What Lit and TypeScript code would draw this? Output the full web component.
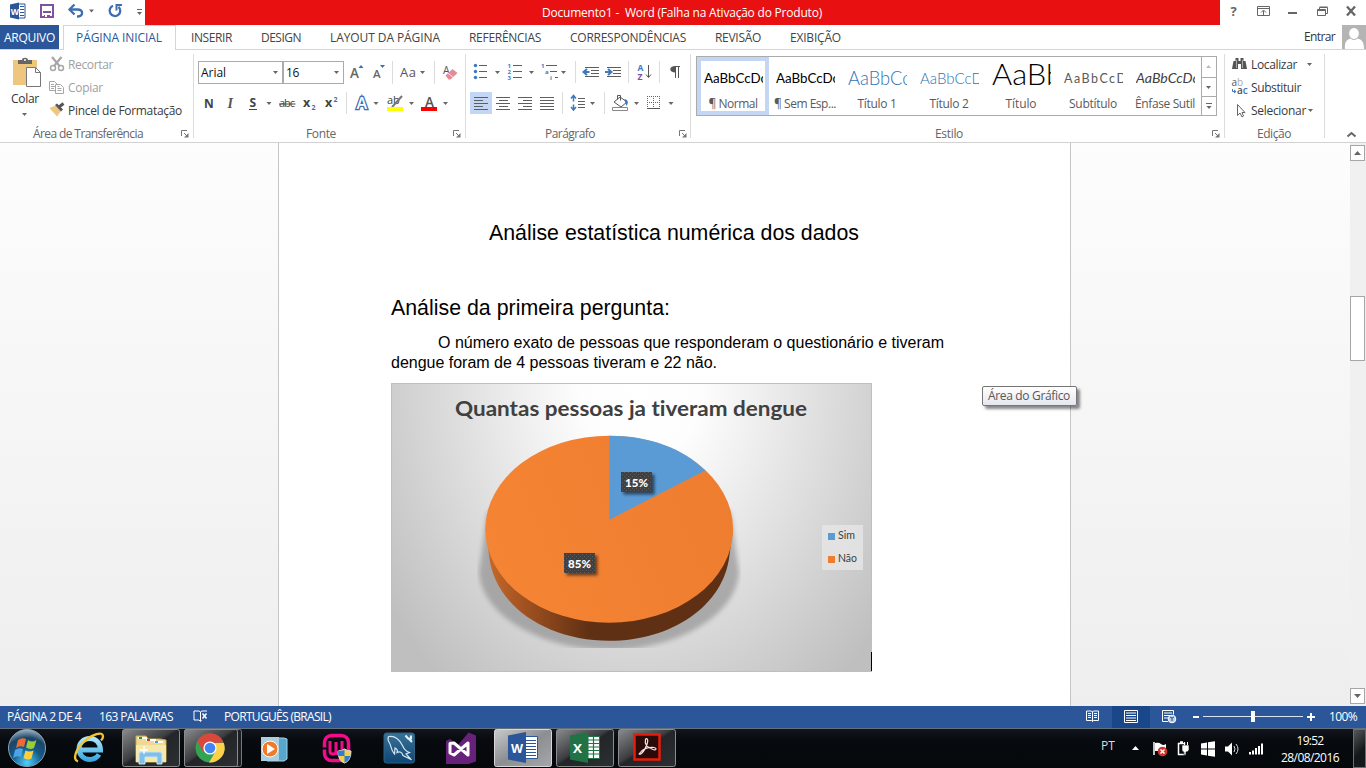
import { LitElement, html, svg, css } from "lit";
import { customElement } from "lit/decorators.js";

// Icon cell: the viewBox is given in window coordinates, so glyph parts share one grid.
const cell = (x: number, y: number, w: number, h: number, body: unknown) =>
  html`<svg class="cell" width=${w} height=${h} viewBox="${x} ${y} ${w} ${h}">${body}</svg>`;

// Text run set to a given advance width.
const t = (text: string, w: number, cls = "") =>
  html`<span class="t ${cls}" data-w=${w}>${text}</span>`;

const arrow = (x: number, y: number, c = "#666") => svg`<path d="M${x} ${y}h5l-2.5 3z" fill=${c} />`;
const vline = (x: number, y: number, h: number) => svg`<path d="M${x + 0.5} ${y}v${h}" stroke="#dcdcdc" />`;
const lines = (x: number, y: number, ws: number[][], step = 3) =>
  ws.map(([dx, w], i) => svg`<rect x=${x + dx} y=${y + i * step} width=${w} height="1" fill="#5e5e5e" />`);

const launcher = html`<svg class="launch" width="8" height="8" viewBox="0 0 8 8">
  <path d="M.5 6V.5H6M3 3l3 3" stroke="#777" fill="none" /><path d="M7.500 3v4.500H3z" fill="#777" /></svg>`;

const TABS: [string, number][] = [
  ["INSERIR", 41], ["DESIGN", 40], ["LAYOUT DA PÁGINA", 110], ["REFERÊNCIAS", 72],
  ["CORRESPONDÊNCIAS", 116], ["REVISÃO", 46], ["EXIBIÇÃO", 51],
];

const STYLES = [
  { s: "AaBbCcDc", n: "¶ Normal", w: 49, size: 13, len: 63, c: "#000", wt: 400, y: 22 },
  { s: "AaBbCcDc", n: "¶ Sem Esp...", w: 62, size: 13, len: 63, c: "#000", wt: 400, y: 22 },
  { s: "AaBbCc", n: "Título 1", w: 39, size: 19, len: 63, c: "#2e74b5", wt: 300, y: 24 },
  { s: "AaBbCcD", n: "Título 2", w: 39, size: 16, len: 63, c: "#2e74b5", wt: 300, y: 22.5 },
  { s: "AaBb", n: "Título", w: 31, size: 29, len: 71, c: "#000", wt: 300, y: 24 },
  { s: "AaBbCcD", n: "Subtítulo", w: 48, size: 12.5, len: 62, c: "#5a5a5a", wt: 400, y: 22, sp: true },
  { s: "AaBbCcDc", n: "Ênfase Sutil", w: 60, size: 13, len: 63, c: "#404040", wt: 400, y: 22, it: true },
];

const quick = cell(0, 0, 145, 25, svg`
  <path d="M18 4h7v14h-7z" fill="#fff" stroke="#2b579a" /><path d="M20 6.500h4M20 9.500h4M20 12.500h4M20 15.500h4" stroke="#2b579a" />
  <path d="M10 4.500l9-2v17l-9-2z" fill="#2b579a" /><text x="10.800" y="14.500" class="gl" font-size="8.500" font-weight="700" fill="#fff" textLength="7.500">W</text>
  <path d="M41 5h12v12h-12z" fill="none" stroke="#80519f" stroke-width="2" /><path d="M43 11h8v2h-8zM44 15h6v3h-6z" fill="#80519f" /><path d="M45 15h2v2h-2z" fill="#fff" />
  <path d="M71 9.500h6.500c6 0 6 7 .5 7h-1" fill="none" stroke="#3e6db5" stroke-width="2.300" /><path d="M74.500 4.500l-5 5 5 5" fill="none" stroke="#3e6db5" stroke-width="2.300" />
  ${arrow(89, 9.5)}
  <path d="M113 5.800a5.300 5.300 0 1 0 5.500 1" fill="none" stroke="#3e6db5" stroke-width="2.300" /><path d="M116.500 10.500V5h5.500" fill="none" stroke="#3e6db5" stroke-width="2" />
  <path d="M137 9.500h5" stroke="#666" />${arrow(137, 12)}`);

const windowKeys = cell(1220, 0, 146, 25, svg`
  <text x="1230.500" y="16" class="gl" font-size="13" font-weight="700" fill="#666">?</text>
  <path d="M1257.500 6.500h12v9h-12zM1257.500 8.500h12" fill="none" stroke="#666" /><path d="M1263.500 15v-4M1261 12.500l2.500-2.500 2.500 2.500" fill="none" stroke="#666" />
  <path d="M1288 13h9" stroke="#666" stroke-width="2" />
  <path d="M1319.500 9V7.500h8v6h-2M1319.500 7h8" fill="none" stroke="#666" /><path d="M1317.500 9.500h8v6h-8zM1317.500 10.500h8" fill="#fff" stroke="#666" />
  <path d="M1347 6.500l8 9M1355 6.500l-8 9" stroke="#666" stroke-width="2.300" />`);

const avatar = cell(1342, 25, 24, 24, svg`<path d="M1342 25h24v24h-24z" fill="#b4b4b4" />
  <path d="M1345 49c-1-8 3-10 6-10.500h6c4 .5 7 2.500 7 10.500z" fill="#fff" /><ellipse cx="1354" cy="33.500" rx="5.300" ry="6" fill="#fff" stroke="#b4b4b4" />`);

const paste = cell(6, 55, 38, 37, svg`
  <path d="M13 61h24v25H13z" fill="#eec67d" /><path d="M18 65v-4h4c0-3 6-3 6 0h4v4z" fill="#666" /><circle cx="25" cy="61" r="1" fill="#fff" />
  <path d="M26.500 68.500h9l5 5v14h-14z" fill="#fff" stroke="#777" /><path d="M35.500 68.500v5h5" fill="none" stroke="#777" />`);
const cut = cell(47, 54, 21, 22, svg`<g fill="none" stroke="#a6a6a6" stroke-width="1.500"><circle cx="53" cy="68" r="2.500" /><circle cx="61" cy="68" r="2.500" /></g>
  <path d="M52 57l7.500 9M61.500 57L54 66" stroke="#a6a6a6" stroke-width="2.200" />`);
const copy = cell(47, 76, 21, 23, svg`<g stroke="#a6a6a6" fill="#fff"><path d="M49.500 81.500h5l3 3v6h-8z" /><path d="M55.500 84.500h5l3 3v6h-8z" /></g>
  <path d="M51 84.500h3M51 86.500h4M51 88.500h3M57.500 88.500h4M57.500 90.500h4M57.500 86.500h2" stroke="#a6a6a6" />`);
const brush = cell(47, 99, 21, 23, svg`<path d="M49.500 108l6-2.500 5.500 5.500-4 5.500z" fill="#eec67d" /><path d="M55 105l2-1.500 6 6-2 2z" fill="#555" /><path d="M59 107l4.500-3.500" stroke="#555" stroke-width="3" />`);

const fontRow1 = cell(344, 61, 121, 24, svg`
  <text x="350" y="78" class="gl" font-size="13.500" font-weight="600" fill="#666">A</text><path d="M358.500 68h5l-2.500-3z" fill="#3e6db5" />
  <text x="373" y="78" class="gl" font-size="11.500" font-weight="600" fill="#666">A</text><path d="M380 65h5l-2.500 3z" fill="#3e6db5" />
  ${vline(392, 61, 23)}<text x="400" y="76.500" class="gl" font-size="13" fill="#555" textLength="16">Aa</text>${arrow(420, 71)}${vline(434, 61, 23)}
  <text x="443" y="74" class="gl" font-size="10.500" fill="#555">A</text><path d="M445.500 75.500l7-6.500 5 4-7 6.500h-2z" fill="#e8899a" /><path d="M448 73.200l5 4" stroke="#fff" stroke-width=".8" />`);
const fontRow2 = cell(198, 92, 267, 24, svg`
  <text x="204" y="107.500" class="gl" font-size="12" font-weight="700" fill="#444" textLength="10">N</text>
  <text x="227.500" y="107.500" font-family="Liberation Serif" font-size="14" font-weight="700" font-style="italic" fill="#555">I</text>
  <text x="249.500" y="107" class="gl" font-size="12" font-weight="700" fill="#444">S</text><path d="M249 109.500h8" stroke="#444" />${arrow(266.5, 102)}
  <text x="279" y="107" class="gl" font-size="11" fill="#444" textLength="16">abc</text><path d="M279 104h16.500" stroke="#444" />
  <text x="303" y="107" class="gl" font-size="12.500" font-weight="700" fill="#444">x</text><text x="311.500" y="109.500" class="gl" font-size="7" font-weight="700" fill="#3e6db5">2</text>
  <text x="325" y="107" class="gl" font-size="12.500" font-weight="700" fill="#444">x</text><text x="333.500" y="102" class="gl" font-size="7" font-weight="700" fill="#3e6db5">2</text>
  ${vline(346, 92, 22)}
  <text x="356.500" y="108.500" class="gl" font-size="16" font-weight="600" fill="#fff" stroke="#3e6db5" stroke-width="2.600" paint-order="stroke">A</text>${arrow(373.5, 102)}
  <text x="387" y="104" class="gl" font-size="11" fill="#444">ab</text><path d="M402 96l-8 9-2 2" stroke="#777" stroke-width="2" /><path d="M387 107h16v4h-16z" fill="#ff0" />${arrow(409, 102)}
  <text x="425" y="107" class="gl" font-size="13.500" font-weight="600" fill="#555">A</text><path d="M421 107h16v4h-16z" fill="#f00" />${arrow(443, 102)}`);

const parRow1 = cell(470, 61, 220, 24, svg`
  <g fill="#3e79bd"><circle cx="475.500" cy="65.500" r="1.700" /><circle cx="475.500" cy="71.500" r="1.700" /><circle cx="475.500" cy="77.500" r="1.700" /></g>
  ${lines(479, 65, [[0, 8], [0, 8], [0, 8]], 6)}${arrow(495, 71)}
  <g class="gl" font-size="6" font-weight="700" fill="#3e79bd"><text x="507.500" y="68">1</text><text x="507.500" y="74">2</text><text x="507.500" y="80">3</text></g>
  ${lines(513, 65, [[0, 9], [0, 9], [0, 9]], 6)}${arrow(529, 71)}
  <g class="gl" font-size="6" font-weight="700" fill="#3e79bd"><text x="541" y="68">1</text><text x="545" y="74">a</text><text x="550" y="80">i</text></g>
  ${lines(546, 65, [[0, 11], [4, 7], [9, 3]], 6)}${arrow(561, 71)}${vline(575, 61, 22)}
  <path d="M583.500 72h6M587 69l-3.500 3 3.500 3" fill="none" stroke="#3e79bd" stroke-width="2" />${lines(585, 67, [[0, 14], [6, 8], [6, 8], [0, 14]])}
  <path d="M605 72h6M608 69l3.500 3-3.500 3" fill="none" stroke="#3e79bd" stroke-width="2" />${lines(607, 67, [[0, 14], [6, 8], [6, 8], [0, 14]])}
  ${vline(628, 61, 22)}
  <text x="637.500" y="71" class="gl" font-size="8.500" font-weight="700" fill="#3e79bd">A</text><text x="637.500" y="79.500" class="gl" font-size="8.500" font-weight="700" fill="#80519f">Z</text>
  <path d="M648.500 65v12M646 74.500l2.500 3 2.500-3" fill="none" stroke="#555" />${vline(659, 61, 22)}
  <path d="M675 66.500h5M675.500 67v11M678.500 67v11" stroke="#555" /><path d="M675.500 66c-7 0-7 6.500 0 6.500z" fill="#555" />`);
const parRow2 = cell(470, 92, 220, 24, svg`
  <path d="M470 92h22v22h-22z" fill="#c3d6f3" />
  ${lines(474, 97, [[0, 14], [0, 9], [0, 14], [0, 9], [0, 14]])}
  ${lines(496, 97, [[0, 14], [3, 9], [0, 14], [3, 9], [0, 14]])}
  ${lines(518, 97, [[0, 14], [5, 9], [0, 14], [5, 9], [0, 14]])}
  ${lines(540, 97, [[0, 14], [0, 14], [0, 14], [0, 14], [0, 14]])}
  ${vline(562, 92, 22)}
  <path d="M573.500 96v5.500M571 98.500l2.500-3 2.500 3M573.500 104.500v5.500M571 107l2.500 3 2.500-3" fill="none" stroke="#3e79bd" stroke-width="1.500" />${lines(578, 98, [[0, 7], [0, 7], [0, 7], [0, 7]])}${arrow(590, 102)}
  ${vline(604, 92, 22)}
  <path d="M614 102l6-5 7 5-6 5z" fill="#fff" stroke="#555" /><path d="M617.500 99.500v-4h3v5" fill="none" stroke="#555" /><path d="M624.500 99c4 1 4 4 2 7l-1.500-4z" fill="#3e79bd" /><path d="M612.500 107.500h15v3h-15z" fill="#fff" stroke="#888" />${arrow(634, 102)}
  <path d="M647.500 96v12M653.500 96v12M659.500 96v12M647 96.500h13M647 102.500h13" stroke="#666" stroke-dasharray="1 1" /><path d="M647 108.500h13" stroke="#555" />${arrow(668.5, 102)}`);

const find = cell(1230, 54, 21, 22, svg`<path d="M1232 69l1.500-8h2v-3h3v3h2v-3h3v3h2l1.500 8h-6v-5h-3v5z" fill="#555" /><path d="M1236.500 60v8M1242.500 60v8" stroke="#aaa" />`);
const replace = cell(1230, 76, 21, 23, svg`<g class="gl" font-size="10" fill="#555"><text x="1231.500" y="86">a<tspan fill="#aaa">b</tspan></text><text x="1237" y="94" font-weight="600">a<tspan fill="#3e79bd">c</tspan></text></g>
  <path d="M1232.500 89v2.500h3M1234 90l2 1.500-2 1.500" fill="none" stroke="#3e79bd" />`);
const select = cell(1230, 99, 21, 23, svg`<path d="M1237.500 104.500v11l2.500-2.500 2 4 1.500-1-1.500-3.500h3z" fill="#fff" stroke="#666" />`);

const pie = svg`
  <defs>
    <radialGradient id="bg" gradientUnits="userSpaceOnUse" cx="640" cy="385" r="385" gradientTransform="translate(640 385) scale(.8 1) translate(-640 -385)">
      <stop offset="0" stop-color="#fff" /><stop offset=".2" stop-color="#fdfdfd" /><stop offset=".4" stop-color="#eeeeee" /><stop offset=".6" stop-color="#dedede" /><stop offset=".78" stop-color="#d0d0d0" /><stop offset="1" stop-color="#bfbfbf" /></radialGradient>
    <linearGradient id="side" gradientUnits="userSpaceOnUse" x1="486" x2="733" y1="0" y2="0">
      <stop offset="0" stop-color="#c66a2b" /><stop offset=".15" stop-color="#a35221" /><stop offset=".42" stop-color="#5f3013" /><stop offset="1" stop-color="#5f3013" /></linearGradient>
    <linearGradient id="top" x1="0" x2="1" y1=".7" y2=".4"><stop offset="0" stop-color="#f58434" /><stop offset="1" stop-color="#ee7d30" /></linearGradient>
    <filter id="soft" x="-10%" y="-10%" width="120%" height="120%"><feGaussianBlur stdDeviation="2.500" /></filter>
    <filter id="drop" x="-20%" y="-20%" width="160%" height="180%"><feDropShadow dx="2.500" dy="2.500" stdDeviation="1.500" flood-opacity=".55" /></filter>
    <pattern id="dots" width="4" height="4" patternUnits="userSpaceOnUse"><path d="M0 0h4v4H0z" fill="#3f3f3f" /><path d="M0 0h1v1H0zM2 2h1v1H2z" fill="#5c5c5c" /></pattern>
    <clipPath id="cut"><path d="M477 430h264v218H477z" /></clipPath>
  </defs>
  <path d="M391 383h481v289H391z" fill="url(#bg)" />
  <path d="M391.500 383.500h480v288h-480z" fill="none" stroke="#bfbfbf" />
  <g clip-path="url(#cut)"><path d="M500 500L487 514L479 572C482 618 545 650 609 650S736 618 739 572L731 514L718 500z" fill="#808080" opacity=".55" filter="url(#soft)" /></g>
  <path d="M485.500 529L489 555C494 606 547 640.800 609.300 640.800S724 606 729.500 555L733 529z" fill="url(#side)" />
  <ellipse cx="609.200" cy="529.200" rx="123.900" ry="93.500" fill="url(#top)" />
  <path d="M609.300 519.700V435.700C650 435.700 683 448.500 705.200 470.400z" fill="#5b9bd5" />
  <text x="455" y="415.700" textLength="352" lengthAdjust="spacingAndGlyphs" class="lato" font-size="21.500" font-weight="700" fill="#404040">Quantas pessoas ja tiveram dengue</text>
  <path d="M621 472h31v20h-31z" fill="url(#dots)" filter="url(#drop)" /><path d="M564 553h31v20h-31z" fill="url(#dots)" filter="url(#drop)" />
  <g class="lato" font-size="11.500" font-weight="900" fill="#fff"><text x="625" y="487" textLength="23">15%</text><text x="568" y="568" textLength="23">85%</text></g>
  <path d="M822 525h41v45h-41z" fill="#e6e6e6" opacity=".8" />
  <path d="M828 533h7v7h-7z" fill="#5b9bd5" /><path d="M828 556h7v7h-7z" fill="#ed7d31" />
  <g class="lato" font-size="12" fill="#404040"><text x="838" y="539.300" textLength="17" lengthAdjust="spacingAndGlyphs">Sim</text><text x="838" y="562.300" textLength="19" lengthAdjust="spacingAndGlyphs">Não</text></g>
  <path d="M871.500 652v19" stroke="#000" />`;

const frame = (x: number, hot = false) => svg`<rect x=${x + 0.5} y="729.500" width="57" height="37" rx="2" fill=${hot ? "url(#hot)" : "url(#warm)"} stroke=${hot ? "#d8d8d8" : "#8c8c8c"} />`;
const office = (x: number, letter: string, c: string, grid: unknown) => svg`
  ${grid}<path d="M${x} 735.500l18-3.500v31l-18-3.500z" fill=${c} /><text x=${x + 3} y="752.500" class="gl" font-size="13" font-weight="700" fill="#fff" textLength=${letter === "W" ? 12 : 9} lengthAdjust="spacingAndGlyphs">${letter}</text>`;
const taskDefs = svg`<defs>
  <linearGradient id="warm" x2="1" y2="1"><stop offset="0" stop-color="#898b8d" /><stop offset=".45" stop-color="#3b3d40" /><stop offset=".5" stop-color="#232528" /><stop offset="1" stop-color="#2c3033" /></linearGradient>
  <linearGradient id="hot" x2="1" y2="1"><stop offset="0" stop-color="#c9cbcd" /><stop offset=".5" stop-color="#8c8e91" /><stop offset="1" stop-color="#a5a7aa" /></linearGradient>
  <radialGradient id="orb" cx=".5" cy=".9" r=".9"><stop offset="0" stop-color="#50d0ff" /><stop offset=".45" stop-color="#145a88" /><stop offset=".75" stop-color="#1c4466" /><stop offset="1" stop-color="#9db6c8" /></radialGradient>
  <linearGradient id="ie" gradientUnits="userSpaceOnUse" x1="0" x2="0" y1="735" y2="763"><stop offset="0" stop-color="#bdf0ff" /><stop offset="1" stop-color="#2a9fe0" /></linearGradient>
  <linearGradient id="sea" x2="0" y2="1"><stop offset="0" stop-color="#3a7299" /><stop offset="1" stop-color="#0d4674" /></linearGradient></defs>`;
const apps = cell(0, 729, 690, 39, svg`${taskDefs}
  <circle cx="27" cy="748" r="18.500" fill="url(#orb)" stroke="#8aa3b5" />
  <path d="M18 740q4-3 8-1l-2 8q-4-2-8 1z" fill="#ee6a30" /><path d="M28 740q4 3 8.500 0l-2.500 8q-4 2-8-.5z" fill="#9ccb3b" /><path d="M15 750q4-3 8-1l-2 8q-4-2-8 1z" fill="#4aa5e8" /><path d="M25.500 750.500q4 2 8 0l-2 8q-4 2-8-.5z" fill="#fccf3b" />
  <path d="M80 750h20.500c0-7-4.500-11.500-10.800-11.500-6 0-10.700 4.500-10.700 10.500s4.700 10.500 10.700 10.500c4 0 7.300-1.800 9.300-5" fill="none" stroke="url(#ie)" stroke-width="5" /><path d="M78 761.500c-6-2-2-13 6-20s19-11 19-5c0 2-1 3-2 4" fill="none" stroke="#f4c430" stroke-width="2.300" />
  ${frame(122)}<path d="M136 736h10l2 3h12l6 1v22h-30z" fill="#eed892" stroke="#c7a94e" /><path d="M138 738h9M146 740h10M154 742h9" stroke="#fff" stroke-width="2" /><path d="M139 738h3" stroke="#1a9c3b" stroke-width="2" /><path d="M147 740h3" stroke="#d03a28" stroke-width="2" /><path d="M155 742h3" stroke="#3aa0df" stroke-width="2" /><path d="M136 745h30v17h-30z" fill="#f6e7ab" /><path d="M139 764v-10q0-2 2-2h19q2 0 2 2v10h-5v-7h-12v7z" fill="#7fbfe8" stroke="#c6e6fa" /><path d="M140 750h8M144 746v8" stroke="#fff" stroke-width="1.300" />
  <rect x="184.500" y="729.500" width="57" height="37" rx="2" fill="#1c1f22" stroke="#777" /><rect x="184.500" y="729.500" width="53" height="37" rx="2" fill="url(#warm)" stroke="#8c8c8c" />
  <circle cx="210" cy="748" r="14.500" fill="#34a351" /><path d="M197.400 741a14.500 14.500 0 0 1 26.200 1.500L210 743l-7 9z" fill="#d9483b" /><path d="M223.800 743A14.500 14.500 0 0 1 209 762.500l7-12-1-7.500z" fill="#fbd14b" /><circle cx="210" cy="748" r="6.600" fill="#fff" /><circle cx="210" cy="748" r="5.300" fill="#4285f4" />
  <path d="M267 738h17l3 1v20l-3 2h-17z" fill="#5aa5cc" stroke="#9fd3ea" /><path d="M261 737h18v24h-18z" fill="#a9cfe1" /><circle cx="270" cy="749" r="8" fill="#f07a28" stroke="#fff" /><path d="M267 744l8 5-8 5z" fill="#fff" />
  <rect x="324.500" y="735.500" width="24" height="25" rx="7" fill="none" stroke="#f30b8c" stroke-width="3.500" /><path d="M330 741v10q0 3 3 3t3-3v-9 9q0 3 3 3t3-3v-10" fill="none" stroke="#f30b8c" stroke-width="3" /><path d="M322 748.500h5" stroke="#0a0d12" stroke-width="2" /><path d="M344.500 749q3 2 6.500 2 0 10-6.500 12-6.500-2-6.500-12 3.500 0 6.500-2z" fill="#f7cf45" stroke="#ddd" /><path d="M344.500 750v6h-6q-.5-3-.5-5 3 0 6.500-1zM344.500 756v6.500q4-1 6-6.500z" fill="#2d7fd0" />
  <rect x="384" y="733" width="30.500" height="30" rx="2.500" fill="url(#sea)" stroke="#31617f" /><path d="M388.500 736.500c6-1 11 3 14 9 1.500 4 4 6 7 7l-3.500 1.500 5.500 6M411 759.500l-8-4c-1-3-3-4.500-6-3 1-2 0-3.500-2-4.500l-.5 6c-4-4-3-8-5-11-1.500-2-2-4-1-6.500" fill="none" stroke="#d5e6f0" stroke-width="1.200" /><path d="M405.500 735.500l2.500 3h3v-3M408.500 738.500l3.500 3.500" fill="none" stroke="#e6f0f6" stroke-width="2" />
  <path d="M446 741l4-2 8 6 10.500-12.500 7.500 3v26l-7.500 2.500H446z" fill="#68217a" /><path d="M450 743.500v9.500l4 2 14-12v12l-14-12z" fill="none" stroke="#fff" stroke-width="3" stroke-linejoin="round" />
  ${frame(494, true)}${office(508, "W", "#2b579a", svg`<path d="M524 736.500h13.500v22H524z" fill="#fff" stroke="#2b579a" /><path d="M526 740.500h10M526 743.500h10M526 746.500h10M526 749.500h10M526 752.500h10M526 755.500h10" stroke="#2b579a" stroke-width="1.200" />`)}
  ${frame(556)}${office(570, "X", "#217346", svg`<path d="M588 736.500h11.500v22H588z" fill="#fff" stroke="#217346" /><path d="M588 740h12M588 743.500h12M588 747h12M588 750.500h12M588 754h12M593.500 737v21" stroke="#217346" stroke-width="1.200" />`)}
  ${frame(618)}<path d="M634.500 734.500h25v25h-25z" fill="#2b0a0a" stroke="#e61c0c" stroke-width="2.500" /><path d="M639.500 753.500c2-4 8-6.500 14.500-6 3.500 1 2 3-1 2-6-2-8.500-6-7.500-10 1-2 3 0 2 3-1 4-3.500 8.500-6 11-1.500 1-3 1-2 0z" fill="none" stroke="#f4e5e5" stroke-width="1.200" />`);

const tray = cell(1125, 729, 147, 39, svg`
  <path d="M1132 750h7l-3.500-4z" fill="#fff" />
  <path d="M1154 742v13" stroke="#fff" stroke-width="1.500" /><path d="M1155 743q4-1 6 1t5 0v7h-11z" fill="#fff" /><circle cx="1162.500" cy="751.500" r="4.800" fill="#d6332b" /><path d="M1160.500 749.500l4 4M1164.500 749.500l-4 4" stroke="#fff" stroke-width="1.500" />
  <path d="M1178.500 743.500h6v11h-6zM1180 742h3" fill="none" stroke="#fff" stroke-width="1.500" /><path d="M1182 745h7v5q-1 2-3 2v3h-2v-3q-2 0-2-2z" fill="#fff" stroke="#0a0d12" stroke-width=".6" /><path d="M1184.500 742v3M1187.500 742v3" stroke="#fff" />
  <path d="M1201 743.500l6-1v6h-6zM1208 742.300l7-1v7.200h-7zM1201 749.500h6v6l-6-1zM1208 749.500h7v7.200l-7-1z" fill="#fff" />
  <path d="M1225 746.500h3l4-4v13l-4-4h-3z" fill="#fff" /><path d="M1234 746q2 3 0 6M1236 744q4 5 0 10" fill="none" stroke="#ddd" />
  <path d="M1250 752v2.500M1253 750.500v4M1256 748v6.500M1259 746v8.500M1262 743.500v11" stroke="#fff" stroke-width="2" />`);

const proof = cell(193, 706, 15, 22, svg`<path d="M200.500 712l-1.500-1h-5v9h5l1.500 1.500 1-1.500M200.500 712v9M200.500 712l1.500-1h5" fill="none" stroke="#fff" /><path d="M202.500 713.500l4 5M206.500 713.500l-4 5" stroke="#fff" stroke-width="1.500" />`);
const views = cell(1080, 706, 246, 22, svg`
  <path d="M1092.500 711.500v10M1086.500 711h5l1 1 1-1h5v9.500h-5l-1 1-1-1h-5z" fill="none" stroke="#fff" /><path d="M1088 713.500h3M1088 715.500h3M1088 717.500h3M1094 713.500h3M1094 715.500h3M1094 717.500h3" stroke="#fff" />
  <path d="M1112 706h38v22h-38z" fill="#19478a" /><path d="M1124.500 710.500h13v12h-13zM1126 713h10M1126 715.500h10M1126 718h10M1126 720.500h10" fill="none" stroke="#fff" />
  <path d="M1168 721.500h-5.500v-11h11v4M1164 713h8M1164 715.500h6M1164 718h4" fill="none" stroke="#fff" /><circle cx="1172" cy="719" r="3.800" fill="#b9cbe5" stroke="#fff" /><path d="M1170 717l2 1 2-1M1172 718v3" stroke="#2b579a" fill="none" />
  <path d="M1193 717h6M1307 717h8M1311 713v8" stroke="#fff" stroke-width="2" /><path d="M1203 716.500h100" stroke="#dbe4f1" /><path d="M1251 711h4v11h-4z" fill="#fff" />`);

@customElement("app-root")
export class AppRoot extends LitElement {
  static styles = css`
    :host { display: flex; flex-direction: column; width: 1366px; height: 768px; overflow: hidden; background: #fff;
      font: 12px/20px "Open Sans", "Noto Sans", sans-serif; color: #444; }
    * { box-sizing: border-box; }
    .cell { display: block; flex: none; }
    .gl { font-family: "Open Sans", sans-serif; }
    .lato { font-family: Lato, sans-serif; font-variant-ligatures: none; }
    .t { display: inline-block; white-space: pre; flex: none; }
    .row { display: flex; }
    .title { flex: 1; height: 25px; background: #e81010; color: #fff; display: flex; align-items: center; padding-left: 397px; line-height: 24px; }
    .tabs { height: 25px; display: flex; align-items: center; border-bottom: 1px solid #d5d5d5; }
    .file { width: 59px; height: 24px; padding-left: 4px; background: #2b579a; color: #fff; line-height: 25px; }
    .active { width: 113px; height: 25px; margin-left: 4px; padding-left: 12px; border: 1px solid #d5d5d5; border-width: 1px 1px 0; margin-bottom: -1px; background: #fff; color: #2b579a; line-height: 24px; }
    .rest { flex: 1; display: flex; gap: 29px; padding-left: 15px; line-height: 25px; height: 24px; }
    .user { width: 62px; display: flex; justify-content: space-between; line-height: 24px; color: #333; height: 24px; }
    .ribbon { height: 93px; display: flex; border-bottom: 1px solid #d2d2d2; }
    .group { display: flex; flex-direction: column; height: 84px; margin-top: 4px; border-right: 1px solid #dcdcdc; }
    .clip { width: 194px; } .font { width: 272px; } .par { width: 225px; } .sty { width: 534px; } .edit { width: 100px; }
    .body { height: 72px; flex: none; display: flex; }
    .foot { height: 16px; flex: none; display: flex; line-height: 16px; color: #666; align-items: center; padding-right: 4px; justify-content: space-between; }
    .clip .foot { padding-left: 33px; } .font .foot { padding-left: 112px; } .par .foot { padding-left: 79px; padding-right: 3px; } .sty .foot { padding-left: 244px; } .edit .foot { padding-left: 32px; }
    .pastecol { width: 47px; display: flex; flex-direction: column; align-items: center; }
    .pastecol .cell { margin-right: -3px; }
    .pastecol .t { line-height: 15px; margin-left: 3px; color: #333; }
    .stack { display: flex; flex-direction: column; }
    .item { height: 22px; display: flex; line-height: 22px; color: #3b3b3b; }
    .item:nth-child(n + 2) { height: 23px; line-height: 23px; }
    .item.off { color: #a0a0a0; }
    .toolrows { display: flex; flex-direction: column; padding: 7px 0 0 4px; gap: 7px; }
    .boxes { display: flex; }
    .combo { height: 23px; border: 1px solid #ababab; display: flex; justify-content: space-between; align-items: center; color: #111; padding: 0 4px 0 2px; line-height: 21px; }
    .face { width: 85px; } .size { width: 61px; border-left: 1px solid #ababab; }
    .gallery { display: flex; margin: 2px 0 0 5px; height: 60px; width: 521px; border: 1px solid #ababab; }
    .style { width: 72px; height: 58px; display: flex; flex-direction: column; align-items: center; padding-top: 4px; line-height: 15px; color: #5a5a5a; }
    .chosen { box-shadow: inset 0 0 0 4px #c3d6f3; }
    .desk { height: 563px; display: flex; background: linear-gradient(#fdfdfd, #eeeeee); }
    .page { width: 793px; margin-left: 278px; background: #fff; border: 1px solid #c6c6c6; border-width: 0 1px; padding: 78px 112px 0; color: #000; font-family: "Liberation Sans", Arial, sans-serif; display: flex; flex-direction: column; align-items: flex-start; }
    .h { font-size: 21.330px; line-height: 24px; }
    .mid { margin-left: 98px; } .sub { margin-top: 51px; }
    .p { font-size: 16px; line-height: 20px; } .first { margin: 13px 0 0 47px; }
    .chart { margin-top: 10px; }
    .bar { width: 16px; margin-left: 279px; background: #f0f0f0; padding: 2px 1px 2px 0; display: flex; flex-direction: column; }
    .btn { height: 16px; border: 1px solid #a6a6a6; background: #fff; display: flex; justify-content: center; align-items: center; }
    .thumb { height: 66px; margin: 135px 0 327px; border: 1px solid #a6a6a6; background: #fff; }
    .tip { position: absolute; left: 982px; top: 386px; width: 95px; height: 20px; border: 1px solid #767676; border-radius: 2px; background: linear-gradient(#fff, #e6e6f0); box-shadow: 3px 3px 3px #0007; color: #575757; padding-left: 5px; line-height: 18px; }
    .status { height: 22px; background: #2b579a; color: #fff; display: flex; line-height: 22px; padding-left: 7px; }
    .s2 { margin: 0 20px 0 18px; } .s3 { margin-left: 16px; } .views { margin-left: auto; display: flex; } .zoom { margin: 0 9px 0 3px; }
    .task { height: 40px; display: flex; background: linear-gradient(#11161d, #070a0e 30%, #05080b); border-top: 1px solid #66707c; color: #fff; }
    .lang { margin-left: 411px; width: 24px; line-height: 34px; color: #ddd; }
    .clock { width: 80px; display: flex; flex-direction: column; align-items: center; line-height: 17px; padding: 3px 4px 0 0; }
    .show { margin-left: auto; width: 13px; border: 1px solid #6b6f73; background: linear-gradient(135deg, #55585b, #15181b 60%); }
  `;

  // Spread each run over the width it is meant to occupy.
  updated() {
    this.renderRoot.querySelectorAll<HTMLElement>("[data-w]").forEach((el) => {
      el.style.letterSpacing = "0px";
      const chars = [...(el.textContent ?? "")].length;
      el.style.letterSpacing = `${(Number(el.dataset.w) - el.getBoundingClientRect().width) / chars}px`;
    });
  }

  render() {
    const caret = html`<svg width="5" height="3" viewBox="0 0 5 3">${arrow(0, 0)}</svg>`;
    return html`
      <div class="row">${quick}<div class="title">${t("Documento1 -  Word (Falha na Ativação do Produto)", 280)}</div>${windowKeys}</div>
      <div class="tabs">
        <div class="file">${t("ARQUIVO", 51)}</div><div class="active">${t("PÁGINA INICIAL", 86)}</div>
        <div class="rest">${TABS.map(([n, w]) => t(n, w))}</div>
        <div class="user">${t("Entrar", 31)}${avatar}</div>
      </div>
      <div class="ribbon">
        <div class="group clip">
          <div class="body">
            <div class="pastecol">${paste}${t("Colar", 28)}${cell(20, 107, 10, 14, svg`${arrow(22, 114)}`)}</div>
            <div class="stack">
              <div class="item off">${cut}${t("Recortar", 45)}</div><div class="item off">${copy}${t("Copiar", 35)}</div>
              <div class="item">${brush}${t("Pincel de Formatação", 114)}</div>
            </div>
          </div>
          <div class="foot">${t("Área de Transferência", 110)}${launcher}</div>
        </div>
        <div class="group font">
          <div class="body"><div class="toolrows">
            <div class="boxes"><div class="combo face">${t("Arial", 25)}${caret}</div><div class="combo size">${t("16", 13)}${caret}</div>${fontRow1}</div>
            ${fontRow2}
          </div></div>
          <div class="foot">${t("Fonte", 30)}${launcher}</div>
        </div>
        <div class="group par">
          <div class="body"><div class="toolrows">${parRow1}${parRow2}</div></div>
          <div class="foot">${t("Parágrafo", 50)}${launcher}</div>
        </div>
        <div class="group sty">
          <div class="body"><div class="gallery">
            ${STYLES.map((s, i) => html`<div class="style ${i === 0 ? "chosen" : ""}">
              <svg class="cell" width="59" height="35" viewBox="0 0 59 35"><text x="0" y=${s.y} class="lato" font-size=${s.size} font-weight=${s.wt} font-style=${s.it ? "italic" : "normal"} fill=${s.c} textLength=${s.len} lengthAdjust=${s.sp ? "spacing" : "spacingAndGlyphs"}>${s.s}</text></svg>
              ${t(s.n, s.w)}</div>`)}
            ${cell(1201, 57, 15, 58, svg`<path d="M1201.500 57v58M1202 77.500h14M1202 96.500h14" stroke="#ababab" /><path d="M1206 68h5l-2.500-3z" fill="#bbb" />${arrow(1206, 86)}<path d="M1206 103.500h6" stroke="#666" />${arrow(1206.5, 106)}`)}
          </div></div>
          <div class="foot">${t("Estilo", 28)}${launcher}</div>
        </div>
        <div class="group edit">
          <div class="body"><div class="stack">
            <div class="item">${cell(1225, 54, 5, 22, "")}${find}${t("Localizar", 46)}${cell(1297, 54, 20, 22, arrow(1307, 63))}</div>
            <div class="item">${cell(1225, 76, 5, 23, "")}${replace}${t("Substituir", 50)}</div>
            <div class="item">${cell(1225, 99, 5, 23, "")}${select}${t("Selecionar", 55)}${cell(1306, 99, 12, 23, arrow(1308, 109))}</div>
          </div></div>
          <div class="foot">${t("Edição", 34)}</div>
        </div>
        ${cell(1325, 50, 41, 92, svg`<path d="M1347.500 136.500l4-3.500 4 3.500" fill="none" stroke="#666" stroke-width="2" />`)}
      </div>
      <div class="desk">
        <div class="page">
          ${t("Análise estatística numérica dos dados", 370, "h mid")}
          ${t("Análise da primeira pergunta:", 279, "h sub")}
          ${t("O número exato de pessoas que responderam o questionário e tiveram", 506, "p first")}
          ${t("dengue foram de 4 pessoas tiveram e 22 não.", 326, "p")}
          <svg class="cell chart" width="481" height="289" viewBox="391 383 481 289">${pie}</svg>
        </div>
        <div class="bar">
          <div class="btn"><svg width="7" height="4" viewBox="0 0 7 4"><path d="M0 4h7L3.500 0z" fill="#666" /></svg></div>
          <div class="thumb"></div>
          <div class="btn"><svg width="7" height="4" viewBox="0 0 7 4"><path d="M0 0h7L3.500 4z" fill="#666" /></svg></div>
        </div>
      </div>
      <div class="status">${t("PÁGINA 2 DE 4", 74)}${t("163 PALAVRAS", 74, "s2")}${proof}${t("PORTUGUÊS (BRASIL)", 107, "s3")}
        <div class="views">${views}${t("100%", 28, "zoom")}</div></div>
      <div class="task">${apps}<div class="lang">${t("PT", 14)}</div>${tray}
        <div class="clock">${t("19:52", 27)}${t("28/08/2016", 58)}</div><div class="show"></div></div>
      <div class="tip">${t("Área do Gráfico", 82)}</div>`;
  }
}
